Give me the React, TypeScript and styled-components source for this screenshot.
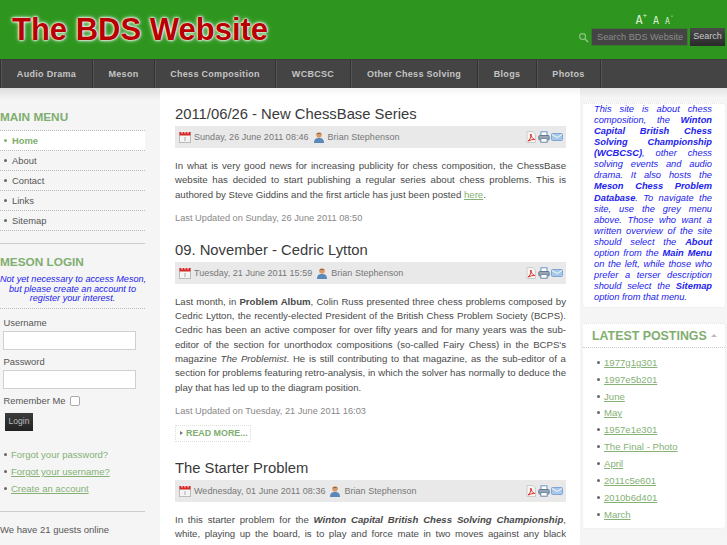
import React from "react";
import styled, { createGlobalStyle } from "styled-components";

const Global = createGlobalStyle`
  html, body { margin: 0; padding: 0; height: 545px; overflow: hidden; background: #fff; }
  body { font-family: "Liberation Sans", Arial, sans-serif; font-size: 9.5px; color: #444; }
  * { box-sizing: border-box; }
`;

const Page = styled.div`width: 727px; height: 545px; overflow: hidden; display: flex; flex-direction: column;`;
const Header = styled.header`height: 59px; flex: none; background: #2e961f; display: flex; justify-content: space-between; padding: 0 2px 0 12px;`;
const Logo = styled.div`
  font-size: 31px; font-weight: 700; color: #b80000; line-height: 33px; margin-top: 13px;
  text-shadow: 0 0 1px #fff, 0 0 2px #fff, 0 0 3px #fff, 0 0 5px rgba(255,255,255,.7);
`;
const HeaderTools = styled.div`display: flex; flex-direction: column; align-items: flex-end;`;
const Sizer = styled.div`display: flex; align-items: flex-end; gap: 6px; height: 26px; padding-right: 51px; color: #dcf0d8; font-family: "DejaVu Sans Mono", monospace; line-height: 1;`;
const SizeA = styled.span<{ $s: number }>`font-size: ${p => p.$s}px; sup { font-size: 7px; line-height: 0; vertical-align: 6px; }`;
const SearchRow = styled.div`display: flex; align-items: center; margin-top: 2px; gap: 2px;`;
const SearchIcon = styled.svg`width: 11px; height: 11px;`;
const SearchInput = styled.div`width: 97px; height: 18px; background: #444; border: 1px solid #3a7a30; color: #8a8a8a; font-size: 9.2px; line-height: 16px; padding-left: 5px; white-space: nowrap;`;
const SearchButton = styled.div`width: 35px; height: 18px; background: linear-gradient(#4a4a4a, #2a2a2a); color: #ccc; font-size: 9px; line-height: 17px; text-align: center;`;

const Nav = styled.nav`height: 29px; flex: none; background: #444; display: flex; border-top: 1px solid #3a3a3a;`;
const NavItem = styled.div<{ $w: number }>`
  width: ${p => p.$w}px; border-left: 1px solid #333; color: #c4c4c4; font-weight: 700; font-size: 9px; letter-spacing: .3px;
  display: flex; align-items: center; justify-content: center; box-shadow: inset 1px 0 0 #555;
`;
const NavEnd = styled.div`border-left: 1px solid #333; box-shadow: inset 1px 0 0 #555; width: 2px;`;

const Body = styled.div`flex: 1; display: grid; grid-template-columns: 160px 420px 147px; min-height: 0;`;
const Left = styled.aside`background: linear-gradient(#dedede, #f5f5f5 12px); padding-top: 22px; overflow: hidden;`;
const Center = styled.main`padding: 16px 14px 0 15px; overflow: hidden; background: linear-gradient(#f3f3f3, #fff 8px);`;
const Right = styled.aside`background: linear-gradient(#e4e4e4, #f5f5f5 10px); padding: 15px 1px 0 2px; overflow: hidden;`;

const SideHeading = styled.h3`margin: 0; font-size: 11.8px; line-height: 14px; font-weight: 700; color: #7fae70;`;
const Menu = styled.ul`list-style: none; margin: 6px 0 0; padding: 0; width: 145px; border-top: 1px dotted #bbb;`;
const MenuItem = styled.li<{ $on?: boolean }>`
  height: 20px; border-bottom: 1px dotted #bbb; display: flex; align-items: center; padding-left: 4px; gap: 5px;
  font-size: 9.4px; font-weight: ${p => p.$on ? 700 : 400}; color: ${p => p.$on ? "#7fae70" : "#555"}; background: ${p => p.$on ? "#fff" : "transparent"};
`;
const Dot = styled.span<{ $c?: string }>`width: 3px; height: 3px; border-radius: 50%; background: ${p => p.$c || "#666"}; flex: none;`;
const Rule = styled.hr<{ $top: number; $bottom: number }>`width: 145px; margin: ${p => p.$top}px 0 ${p => p.$bottom}px; border: 0; border-top: 1px solid #ccc;`;
const Notice = styled.p`width: 145px; margin: 6px 0 0; height: 34px; font-size: 9.1px; line-height: 9.7px; font-style: italic; color: #2222ee; text-align: center; border-bottom: 1px dotted #bbb; white-space: nowrap;`;
const Field = styled.label<{ $first?: boolean }>`display: block; margin-top: ${p => p.$first ? 7 : 0}px; padding-left: 3.5px; font-size: 9.4px; color: #555; line-height: 13px;`;
const InputBox = styled.div`width: 133px; height: 19px; background: #fff; border: 1px solid #d0d0d0; margin: 2px 0 5px 3px;`;
const RememberRow = styled.div`display: flex; align-items: center; gap: 4px; padding-left: 3.5px; font-size: 9.4px; color: #555; line-height: 13px; margin-top: 1px;`;
const Check = styled.span`width: 10px; height: 10px; border: 1px solid #aaa; border-radius: 2px; background: #fff;`;
const LoginBtn = styled.div`width: 28px; height: 18px; margin: 6px 0 0 5px; background: linear-gradient(#3c3c3c, #222); color: #bbb; font-size: 8.5px; line-height: 17px; text-align: center;`;
const LinkList = styled.ul`list-style: none; margin: 15px 0 0; padding: 0 0 0 4px;`;
const LinkItem = styled.li`display: flex; align-items: center; gap: 4px; height: 17px; color: #85b176;`;
const U = styled.span`text-decoration: underline;`;
const Guests = styled.div`line-height: 12px; color: #555;`;

const Article = styled.article`margin-bottom: 16px;`;
const Title = styled.h2`margin: 0; font-size: 14.8px; line-height: 20px; font-weight: 400; color: #3a3a3a;`;
const Meta = styled.div`height: 22px; margin-top: 2px; background: #e9e9e9; display: flex; align-items: center; padding: 0 3px 0 4px; color: #777; font-size: 9px; letter-spacing: .03px;`;
const MetaIcon = styled.svg`width: 12px; height: 12px; flex: none;`;
const MetaDate = styled.span`margin: 0 4px 0 3px;`;
const MetaAuthor = styled.span`margin-left: 3px; flex: 1;`;
const MetaActions = styled.div`display: flex; gap: 1px; margin-left: auto;`;
const Para = styled.p`margin: 11px 0 0; font-size: 9.65px; line-height: 14.3px; text-align: justify; color: #4a4a4a;`;
const Updated = styled.div`margin-top: 10px; font-size: 9.25px; line-height: 12px; color: #888;`;
const More = styled.div`
  display: flex; width: 76px; align-items: center; gap: 3px; margin-top: 8px; height: 17px; padding: 0 0 0 4px;
  border: 1px dotted #ddd; color: #7fae70; font-weight: 700; font-size: 8.9px; white-space: nowrap;
`;
const Tri = styled.span`width: 0; height: 0; border-left: 3px solid #777; border-top: 2px solid transparent; border-bottom: 2px solid transparent;`;
const Green = styled.span`color: #85b176; text-decoration: underline;`;

const Box = styled.section`background: #fff; border: 1px dotted #e4e4e4; border-radius: 4px; margin-bottom: 15px;`;
const Intro = styled.p`margin: 0; padding: 0 13px 6px 11px; height: 203px; font-size: 9.3px; line-height: 11.06px; font-style: italic; color: #2222ee; text-align: justify;`;
const BoxTitle = styled.h3`
  margin: 0; padding-left: 9px; height: 24px; font-size: 12.4px; line-height: 16px; font-weight: 700; color: #7fae70; border-bottom: 1px dotted #ccc;
  display: flex; align-items: center; gap: 4px; white-space: nowrap;
`;
const Up = styled.span`width: 0; height: 0; border-bottom: 3px solid #bbb; border-left: 3px solid transparent; border-right: 3px solid transparent;`;
const Postings = styled.ul`list-style: none; margin: 6px 0 0; padding: 0 0 6px 14px;`;
const PostItem = styled.li`height: 16.85px; display: flex; align-items: center; gap: 4px; font-size: 9.6px; color: #85b176;`;

const Calendar = () => (
  <MetaIcon viewBox="0 0 12 12">
    <rect x=".5" y="1.5" width="11" height="10" fill="#f4f4f4" stroke="#bbb" />
    <rect x=".5" y="1" width="11" height="3.5" fill="#d42a2a" />
    <path d="M3 .5v2M6 .5v2M9 .5v2" stroke="#fff" />
    <path d="M5 7h2M5 9h2" stroke="#aaa" />
  </MetaIcon>
);
const Person = () => (
  <MetaIcon viewBox="0 0 12 12">
    <path d="M1 12c0-4 2-5 5-5s5 1 5 5z" fill="#5a88b8" />
    <circle cx="6" cy="4" r="2.7" fill="#d89a6a" />
    <path d="M3.2 3.6C3.4 1.4 8.6 1.4 8.8 3.6 7 2.6 5 2.6 3.2 3.6z" fill="#8a5a30" />
  </MetaIcon>
);
const Pdf = () => (
  <MetaIcon viewBox="0 0 12 12">
    <path d="M2 .5h6l2.500 2.500V11.500H2z" fill="#f8f4f4" stroke="#ccc" />
    <path d="M3 10c2-1 3-4 2.800-7 .5 3 2 5 4 5.500-2-.2-4 .3-6.800 1.500z" fill="none" stroke="#d8312a" strokeWidth="1" />
  </MetaIcon>
);
const Printer = () => (
  <MetaIcon viewBox="0 0 12 12">
    <rect x="3" y=".8" width="6" height="4" fill="#fff" stroke="#6d96c2" />
    <rect x=".8" y="4.500" width="10.400" height="4.500" rx="1" fill="#9aa5b0" stroke="#5f7a98" />
    <rect x="2.800" y="7.500" width="6.400" height="3.700" fill="#fff" stroke="#6d8aa8" />
  </MetaIcon>
);
const Mail = () => (
  <MetaIcon viewBox="0 0 12 12">
    <rect x=".5" y="2.500" width="11" height="7" rx="1" fill="#a8c8ea" stroke="#7fa6d0" />
    <path d="M1 3.500l5 3 5-3" fill="none" stroke="#f4f8fc" />
  </MetaIcon>
);

const MetaBar = ({ date }: { date: string }) => (
  <Meta>
    <Calendar />
    <MetaDate>{date}</MetaDate>
    <Person />
    <MetaAuthor>Brian Stephenson</MetaAuthor>
    <MetaActions>
      <Pdf />
      <Printer />
      <Mail />
    </MetaActions>
  </Meta>
);

const navItems: [string, number][] = [
  ["Audio Drama", 92], ["Meson", 62], ["Chess Composition", 121], ["WCBCSC", 75],
  ["Other Chess Solving", 127], ["Blogs", 59], ["Photos", 64],
];
const posts = ["1977g1g301", "1997e5b201", "June", "May", "1957e1e301", "The Final - Photo", "April", "2011c5e601", "2010b6d401", "March"];

export default function App() {
  return (
    <Page>
      <Global />
      <Header>
        <Logo>The BDS Website</Logo>
        <HeaderTools>
          <Sizer>
            <SizeA $s={12}>A<sup>+</sup></SizeA>
            <SizeA $s={10}>A</SizeA>
            <SizeA $s={8}>A<sup>-</sup></SizeA>
          </Sizer>
          <SearchRow>
            <SearchIcon viewBox="0 0 12 12">
              <circle cx="5" cy="5" r="3.200" fill="none" stroke="#8fc486" strokeWidth="1.200" />
              <path d="M7.500 7.500l3.500 3.500" stroke="#8fc486" strokeWidth="1.600" />
            </SearchIcon>
            <SearchInput>Search BDS Website</SearchInput>
            <SearchButton>Search</SearchButton>
          </SearchRow>
        </HeaderTools>
      </Header>
      <Nav>
        {navItems.map(([t, w]) => <NavItem key={t} $w={w}>{t}</NavItem>)}
        <NavEnd />
      </Nav>
      <Body>
        <Left>
          <SideHeading>MAIN MENU</SideHeading>
          <Menu>
            <MenuItem $on><Dot $c="#7fae70" />Home</MenuItem>
            <MenuItem><Dot />About</MenuItem>
            <MenuItem><Dot />Contact</MenuItem>
            <MenuItem><Dot />Links</MenuItem>
            <MenuItem><Dot />Sitemap</MenuItem>
          </Menu>
          <Rule $top={12} $bottom={11} />
          <SideHeading>MESON LOGIN</SideHeading>
          <Notice>Not yet necessary to access Meson,<br />but please create an account to<br />register your interest.</Notice>
          <Field $first>Username</Field>
          <InputBox />
          <Field>Password</Field>
          <InputBox />
          <RememberRow>Remember Me <Check /></RememberRow>
          <LoginBtn>Login</LoginBtn>
          <LinkList>
            <LinkItem><Dot />Forgot your password?</LinkItem>
            <LinkItem><Dot /><U>Forgot your username?</U></LinkItem>
            <LinkItem><Dot /><U>Create an account</U></LinkItem>
          </LinkList>
          <Rule $top={14} $bottom={12} />
          <Guests>We have 21 guests online</Guests>
        </Left>
        <Center>
          <Article>
            <Title>2011/06/26 - New ChessBase Series</Title>
            <MetaBar date="Sunday, 26 June 2011 08:46" />
            <Para>In what is very good news for increasing publicity for chess composition, the ChessBase website has decided to start publishing a regular series about chess problems. This is authored by Steve Giddins and the first article has just been posted <Green>here</Green>.</Para>
            <Updated>Last Updated on Sunday, 26 June 2011 08:50</Updated>
          </Article>
          <Article>
            <Title>09. November - Cedric Lytton</Title>
            <MetaBar date="Tuesday, 21 June 2011 15:59" />
            <Para>Last month, in <b>Problem Album</b>, Colin Russ presented three chess problems composed by Cedric Lytton, the recently-elected President of the British Chess Problem Society (BCPS). Cedric has been an active composer for over fifty years and for many years was the sub-editor of the section for unorthodox compositions (so-called Fairy Chess) in the BCPS's magazine <i>The Problemist</i>. He is still contributing to that magazine, as the sub-editor of a section for problems featuring retro-analysis, in which the solver has normally to deduce the play that has led up to the diagram position.</Para>
            <Updated>Last Updated on Tuesday, 21 June 2011 16:03</Updated>
            <More><Tri />READ MORE...</More>
          </Article>
          <Article>
            <Title>The Starter Problem</Title>
            <MetaBar date="Wednesday, 01 June 2011 08:36" />
            <Para>In this starter problem for the <b><i>Winton Capital British Chess Solving Championship</i></b>, white, playing up the board, is to play and force mate in two moves against any black defence. The solution is 23-23 and the competition is open to British residents only.</Para>
          </Article>
        </Center>
        <Right>
          <Box>
            <Intro>This site is about chess composition, the <b>Winton Capital British Chess Solving Championship (WCBCSC)</b>, other chess solving events and audio drama. It also hosts the <b>Meson Chess Problem Database</b>. To navigate the site, use the grey menu above. Those who want a written overview of the site should select the <b>About</b> option from the <b>Main Menu</b> on the left, while those who prefer a terser description should select the <b>Sitemap</b> option from that menu.</Intro>
          </Box>
          <Box>
            <BoxTitle>LATEST POSTINGS <Up /></BoxTitle>
            <Postings>
              {posts.map(p => <PostItem key={p}><Dot /><U>{p}</U></PostItem>)}
            </Postings>
          </Box>
        </Right>
      </Body>
    </Page>
  );
}
